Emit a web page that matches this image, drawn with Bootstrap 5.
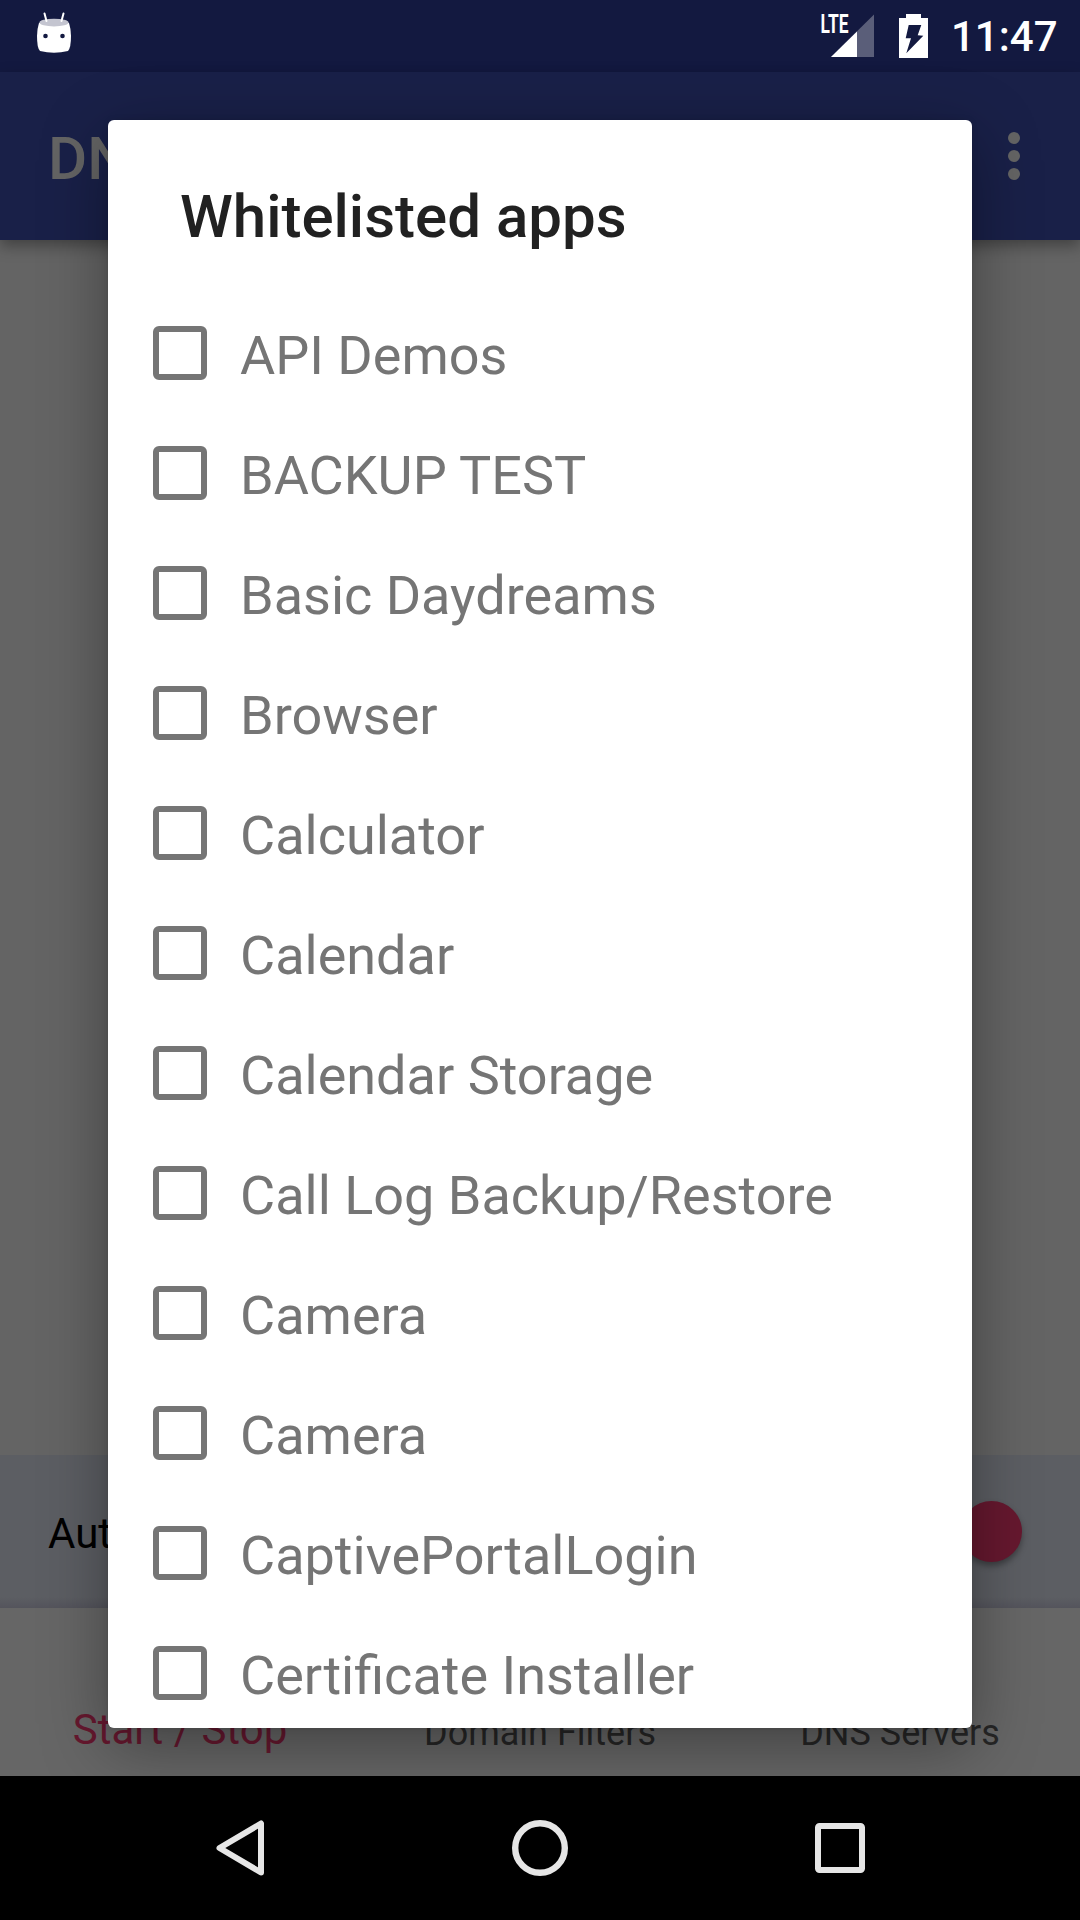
<!DOCTYPE html>
<html lang="en">
<head>
<meta charset="utf-8">
<meta name="viewport" content="width=device-width, initial-scale=1">
<title>Whitelisted apps</title>
<link href="https://cdn.jsdelivr.net/npm/bootstrap@5.3.0/dist/css/bootstrap.min.css" rel="stylesheet">
<style>
  body { font-family: Roboto, "Noto Sans", sans-serif; background: #000; }
  .phone { width: 1080px; height: 1920px; background: #646464; }
  .statusbar { height: 72px; background: #131940; color: #fff; }
  .statusbar svg { display: block; }
  .clock { font-size: 42px; line-height: 49px; font-weight: 500; width: 105px; margin-right: 24px; padding-top: 1px; }
  .appbar { height: 168px; background: #192048; padding: 0 48px; box-shadow: 0 6px 14px rgba(0,0,0,.35); color: #646464; z-index: 1; }
  .app-title { font-size: 60px; line-height: 70px; font-weight: 500; padding-top: 5px; }
  .strip { height: 153px; background: linear-gradient(#5c5e63 0, #5c5e63 142px, #54545c 153px); padding: 0 58px 0 48px; }
  .strip-label { font-size: 42px; line-height: 49px; color: #000; padding-top: 4px; }
  .thumb { width: 61px; height: 61px; background: #66182f; box-shadow: 0 4px 6px rgba(0,0,0,.35); }
  .tabs { height: 168px; background: #666; }
  .tab-label { width: 360px; font-size: 36px; line-height: 42px; color: #262626; text-align: center; padding-bottom: 22px; }
  .tab-label.current { font-size: 42px; line-height: 49px; color: #66182f; }
  .softkeys { height: 144px; background: #000; z-index: 5; }
  .dialog-layer { inset: 0 0 144px 0; overflow: hidden; z-index: 4; padding-top: 120px; }
  .dialog-box { width: 864px; height: 1608px; border-radius: 6px; background: #fff; overflow: hidden; }
  .dialog-shade { height: 1608px; border-radius: 6px; box-shadow: 0 18px 66px rgba(0,0,0,.36), 0 0 6px rgba(0,0,0,.1); }
  .dialog-title { font-size: 60px; line-height: 70px; font-weight: 500; color: #212121; margin: 0; padding: 62px 72px 41px; height: 173px; }
  .app-row { height: 120px; padding-left: 45px; gap: 33px; }
  .app-row .form-check-input { width: 54px; height: 54px; border: 6px solid #757575; border-radius: 6px; margin: 0; background: #fff; flex: none; }
  .app-row .form-check-label { font-size: 54px; line-height: 64px; color: #757575; white-space: nowrap; padding-top: 5px; }
</style>
</head>
<body>
<div class="phone position-relative d-flex flex-column overflow-hidden">
  <header class="statusbar d-flex justify-content-between align-items-center flex-shrink-0">
    <svg width="108" height="72" viewBox="0 0 108 72" aria-hidden="true">
      <path d="M39 23 Q54 20 69 23 Q71 29 71 36 Q71 48 68 51 Q54 54.5 40 51 Q37 48 37 36 Q37 29 39 23Z" fill="#fff"/>
      <ellipse cx="54" cy="22.6" rx="14.6" ry="3.9" fill="#c4c5d0"/>
      <path d="M44.5 13.5 46.5 21M63.5 13.5 61.5 21" stroke="#fff" stroke-width="2" stroke-linecap="round"/>
      <circle cx="45.5" cy="36" r="2.3" fill="#131940"/><circle cx="62.5" cy="36" r="2.3" fill="#131940"/>
    </svg>
    <div class="d-flex align-items-center">
      <svg width="131" height="72" viewBox="820 0 131 72" aria-hidden="true">
        <path d="M831 57 874 14.5V57Z" fill="#5a5e79"/>
        <path d="M831 57 857 31.5V57Z" fill="#fff"/>
        <text x="820.5" y="33.3" font-family="Roboto" font-weight="700" font-size="26" fill="#fff" textLength="28" lengthAdjust="spacingAndGlyphs">LTE</text>
        <path d="M906 14H921V18H928V58H899V18H906Z" fill="#fff"/>
        <path d="M908.7 25H921.3L917.7 35.3 923.3 35.8 906.3 53.3 911 38.3H905.7Z" fill="#131940"/>
      </svg>
      <span class="clock">11:47</span>
    </div>
  </header>
  <nav class="appbar d-flex justify-content-between align-items-center flex-shrink-0 position-relative">
    <span class="app-title">DNS</span>
    <svg width="36" height="72" viewBox="0 0 36 72" fill="#646464" aria-hidden="true"><circle cx="18" cy="18" r="6"/><circle cx="18" cy="36" r="6"/><circle cx="18" cy="54" r="6"/></svg>
  </nav>
  <main class="flex-grow-1"></main>
  <section class="strip d-flex justify-content-between align-items-center flex-shrink-0">
    <span class="strip-label">Auto</span>
    <span class="thumb rounded-circle"></span>
  </section>
  <nav class="tabs d-flex align-items-end flex-shrink-0">
    <span class="tab-label current">Start / Stop</span>
    <span class="tab-label">Domain Filters</span>
    <span class="tab-label">DNS Servers</span>
  </nav>
  <footer class="softkeys d-flex justify-content-center flex-shrink-0 position-relative">
    <svg width="300" height="144" viewBox="90 1776 300 144" fill="none" stroke="#e6e6e6" stroke-width="6" stroke-linejoin="round" aria-hidden="true"><path d="M261 1823.5V1872.5L219.500 1848Z"/></svg>
    <svg width="300" height="144" viewBox="390 1776 300 144" fill="none" stroke="#e6e6e6" stroke-width="6.400" aria-hidden="true"><circle cx="540" cy="1848" r="24.800"/></svg>
    <svg width="300" height="144" viewBox="690 1776 300 144" fill="none" stroke="#e6e6e6" stroke-width="6" aria-hidden="true"><rect x="818" y="1826" width="44" height="44" rx="1.500"/></svg>
  </footer>

  <div class="dialog-layer position-absolute d-flex justify-content-center align-items-start">
    <div class="dialog-shade">
      <div class="dialog-box" role="dialog" aria-labelledby="dlg-title">
        <h1 class="dialog-title" id="dlg-title">Whitelisted apps</h1>
        <div class="app-row d-flex align-items-center"><input class="form-check-input" type="checkbox" id="a1"><label class="form-check-label" for="a1">API Demos</label></div>
        <div class="app-row d-flex align-items-center"><input class="form-check-input" type="checkbox" id="a2"><label class="form-check-label" for="a2">BACKUP TEST</label></div>
        <div class="app-row d-flex align-items-center"><input class="form-check-input" type="checkbox" id="a3"><label class="form-check-label" for="a3">Basic Daydreams</label></div>
        <div class="app-row d-flex align-items-center"><input class="form-check-input" type="checkbox" id="a4"><label class="form-check-label" for="a4">Browser</label></div>
        <div class="app-row d-flex align-items-center"><input class="form-check-input" type="checkbox" id="a5"><label class="form-check-label" for="a5">Calculator</label></div>
        <div class="app-row d-flex align-items-center"><input class="form-check-input" type="checkbox" id="a6"><label class="form-check-label" for="a6">Calendar</label></div>
        <div class="app-row d-flex align-items-center"><input class="form-check-input" type="checkbox" id="a7"><label class="form-check-label" for="a7">Calendar Storage</label></div>
        <div class="app-row d-flex align-items-center"><input class="form-check-input" type="checkbox" id="a8"><label class="form-check-label" for="a8">Call Log Backup/Restore</label></div>
        <div class="app-row d-flex align-items-center"><input class="form-check-input" type="checkbox" id="a9"><label class="form-check-label" for="a9">Camera</label></div>
        <div class="app-row d-flex align-items-center"><input class="form-check-input" type="checkbox" id="a10"><label class="form-check-label" for="a10">Camera</label></div>
        <div class="app-row d-flex align-items-center"><input class="form-check-input" type="checkbox" id="a11"><label class="form-check-label" for="a11">CaptivePortalLogin</label></div>
        <div class="app-row d-flex align-items-center"><input class="form-check-input" type="checkbox" id="a12"><label class="form-check-label" for="a12">Certificate Installer</label></div>
      </div>
    </div>
  </div>
</div>
<script src="https://cdn.jsdelivr.net/npm/bootstrap@5.3.0/dist/js/bootstrap.bundle.min.js"></script>
</body>
</html>
